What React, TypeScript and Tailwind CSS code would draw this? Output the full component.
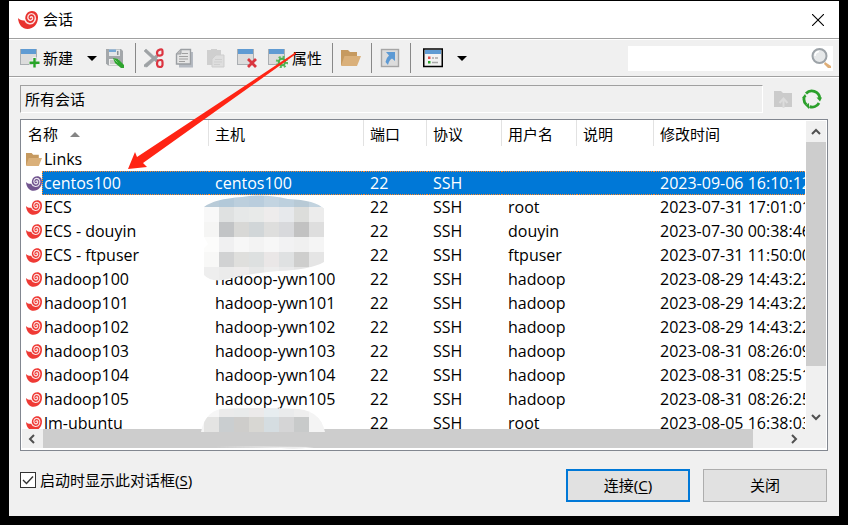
import React from "react";

type Session = {
  name: string;
  host: string;
  port: string;
  protocol: string;
  user: string;
  modified: string;
  folder?: boolean;
  selected?: boolean;
};

const ssh = (name: string, host: string, user: string, modified: string, selected = false): Session => ({
  name,
  host,
  port: "22",
  protocol: "SSH",
  user,
  modified,
  selected,
});

const sessions: Session[] = [
  { name: "Links", host: "", port: "", protocol: "", user: "", modified: "", folder: true },
  ssh("centos100", "centos100", "", "2023-09-06 16:10:12", true),
  ssh("ECS", "", "root", "2023-07-31 17:01:01"),
  ssh("ECS - douyin", "", "douyin", "2023-07-30 00:38:46"),
  ssh("ECS - ftpuser", "", "ftpuser", "2023-07-31 11:50:00"),
  ssh("hadoop100", "hadoop-ywn100", "hadoop", "2023-08-29 14:43:22"),
  ssh("hadoop101", "hadoop-ywn101", "hadoop", "2023-08-29 14:43:22"),
  ssh("hadoop102", "hadoop-ywn102", "hadoop", "2023-08-29 14:43:22"),
  ssh("hadoop103", "hadoop-ywn103", "hadoop", "2023-08-31 08:26:09"),
  ssh("hadoop104", "hadoop-ywn104", "hadoop", "2023-08-31 08:25:51"),
  ssh("hadoop105", "hadoop-ywn105", "hadoop", "2023-08-31 08:26:25"),
  ssh("lm-ubuntu", "", "root", "2023-08-05 16:38:03"),
];

function Shell({ className, fill }: { className: string; fill: string }) {
  return (
    <svg viewBox="0 0 20 18" className={className} aria-hidden="true">
      <path d="M0 7C1.500 9 4.500 9.800 7.500 9.200C6.500 4 9.500 0 14 0C18 0 20 3 20 6.500C20 13 15.500 18 9.500 18C4.500 18 .5 14 0 7Z" fill={fill} />
      <path
        d="M7 9C8.500 13.500 14.500 14 16.600 10.200C18.600 6.500 16.600 2.600 13.400 2.600C10.300 2.600 8.800 6.300 10.600 8.600C12.200 10.300 15 9 14.600 6.800C14.300 5.400 12.800 5.400 12.400 6.600"
        fill="none"
        stroke="#fff"
        strokeOpacity=".85"
        strokeWidth="1.400"
        strokeLinecap="round"
      />
    </svg>
  );
}

function Folder({ className }: { className: string }) {
  return (
    <svg viewBox="0 0 20 16" className={className} aria-hidden="true">
      <path d="M0 0H7L9 2H16V15H0Z" fill="#c69a60" />
      <path d="M3.500 6H20L16 16H0Z" fill="#dab07a" />
    </svg>
  );
}

function WindowIcon({ children }: { children?: React.ReactNode }) {
  return (
    <svg viewBox="0 0 20 20" className="size-5 shrink-0" aria-hidden="true">
      <rect x="0.500" y="1.500" width="16" height="15" fill="#dcdcdc" stroke="#aaaeb2" />
      <rect x="1" y="1" width="15" height="5" fill="#5f9bd3" />
      {children}
    </svg>
  );
}

function Caret() {
  return (
    <svg viewBox="0 0 10 5" className="h-[5px] w-[10px]" aria-hidden="true">
      <path d="M0 0H10L5 5Z" fill="#000" />
    </svg>
  );
}

function Separator() {
  return <div className="ml-[10px] h-[30px] w-px shrink-0 bg-[#888]" />;
}

function Toolbar() {
  return (
    <div className="flex h-[37px] items-center border-t border-white bg-[#f0f0f0] pl-[11px] pr-[6px]">
      <button className="flex items-center gap-[3px] whitespace-nowrap">
        <WindowIcon>
          <path d="M14.500 9V20M9 14.500H20" stroke="#f0f0f0" strokeWidth="4" />
          <path d="M14.500 10V19.500M9.500 14.700H19.500" stroke="#28a428" strokeWidth="2.400" />
        </WindowIcon>
        新建
      </button>
      <button className="ml-[14px]" aria-label="新建选项"><Caret /></button>
      <button className="ml-2" aria-label="保存">
        <svg viewBox="0 0 20 20" className="size-5" aria-hidden="true">
          <path d="M1 1H16L18 3V17.500H3L1 15.500Z" fill="#a3a7aa" />
          <path d="M4 1.500H15V8H4Z" fill="#e4e6e8" />
          <path d="M4 1.500H11V4H4Z" fill="#78a9d6" />
          <path d="M12 3H13.500V7H12Z" fill="#8c9296" />
          <path d="M4 11H14V17H4Z" fill="#eee" />
          <path d="M5 13H10M5 15H11" stroke="#aaa" />
          <path d="M8 10L13 11L19 17V20H16L10 15Z" fill="#2fa52f" />
          <path d="M9.500 11.500L12.500 14.500" stroke="#79cf79" />
        </svg>
      </button>
      <Separator />
      <div className="ml-2 flex items-center gap-[11px]">
        <button aria-label="剪切">
          <svg viewBox="0 0 20 20" className="size-5" aria-hidden="true">
            <path d="M0 3L2 1L14 12L12 14Z M0 17L12 7L14 9L3 19L0 18.500Z" fill="#9ea2a5" stroke="#9ea2a5" strokeWidth=".6" />
            <path d="M14 2.500Q18.500 0 18.500 3V6Q18 8 14 7.500Q12 5 14 2.500ZM14 12.500Q18.500 11 18.500 14V17Q18 20 14 18.500Q12 16 14 12.500Z" fill="none" stroke="#dc3440" strokeWidth="2.200" />
          </svg>
        </button>
        <button aria-label="复制">
          <svg viewBox="0 0 20 20" className="size-5" aria-hidden="true">
            <path d="M6 4H18V19.500H4V16H6Z" fill="#b5bac2" />
            <path d="M6 1.500H15.500V16H1.500V6Z" fill="#e5e5e5" stroke="#9b9fa3" strokeWidth="1.400" />
            <path d="M6 1.500V6H1.500" fill="#bbb" stroke="#9b9fa3" />
            <path d="M7 5.500H13M4 8.500H13M4 11H13M4 13.500H10" stroke="#a0a0a0" />
          </svg>
        </button>
        <button aria-label="粘贴">
          <svg viewBox="0 0 20 20" className="size-5" aria-hidden="true">
            <path d="M1 2H5V1H11V2H15V17H1Z" fill="#cfcfcf" />
            <path d="M10 7H18V19H6V11Z" fill="#dedede" stroke="#cdcdcd" />
            <path d="M9 11.500H16M8 14H16M8 16.500H14" stroke="#cfcfcf" />
          </svg>
        </button>
        <button aria-label="删除">
          <WindowIcon>
            <path d="M11 11L19 19M19 11L11 19" stroke="#d9363f" strokeWidth="2.800" />
          </WindowIcon>
        </button>
        <button className="flex items-center gap-1 whitespace-nowrap">
          <WindowIcon>
            <circle cx="14" cy="14" r="5" fill="none" stroke="#5bb95b" strokeWidth="2.400" strokeDasharray="2 1.920" />
            <circle cx="14" cy="14" r="3.200" fill="#dce9dc" stroke="#4caf4c" strokeWidth="2" />
          </WindowIcon>
          属性
        </button>
      </div>
      <Separator />
      <button className="ml-2" aria-label="打开文件夹"><Folder className="h-4 w-5" /></button>
      <Separator />
      <button className="ml-2" aria-label="快捷方式">
        <svg viewBox="0 0 20 20" className="size-5" aria-hidden="true">
          <rect x="1.500" y="1.500" width="17" height="17" fill="#dcdcdc" stroke="#a5a5a5" strokeWidth="1.400" />
          <path d="M6 4H15V13L12 10.500Q9 12 8 17L5.500 14Q6 10 9 7.500Z" fill="#5d9ad4" />
        </svg>
      </button>
      <Separator />
      <button className="ml-3" aria-label="视图">
        <svg viewBox="0 0 20 20" className="size-5" aria-hidden="true">
          <rect x="0.750" y="1" width="18.500" height="17.500" fill="#f2f2f2" stroke="#000" strokeWidth="1.500" />
          <rect x="2" y="2" width="16" height="4" fill="#5f9bd3" />
          <path d="M5 8.500H7.500V11H5Z" fill="#e05050" />
          <path d="M5 13H7.500V15.500H5Z" fill="#28a428" />
          <path d="M9 10H11M12 10H15M9 14.500H15" stroke="#a8a8a8" strokeWidth="1.500" />
        </svg>
      </button>
      <button className="ml-[14px]" aria-label="视图选项"><Caret /></button>
      <div className="ml-auto flex h-[25px] w-[205px] items-center bg-white pr-[2px]">
        <input type="text" aria-label="搜索" className="min-w-0 flex-1 bg-transparent px-1 outline-none" />
        <button aria-label="开始搜索">
          <svg viewBox="0 0 20 20" className="size-5" aria-hidden="true">
            <path d="M14 14L20 18V20H17L13 16Z" fill="#dfae77" />
            <circle cx="8.500" cy="8" r="7" fill="#e6e8e9" stroke="#9da3a8" strokeWidth="2" />
            <path d="M4 8Q4 4 8 3.500" fill="none" stroke="#fff" strokeWidth="1.500" />
          </svg>
        </button>
      </div>
    </div>
  );
}

function SessionRow({ s }: { s: Session }) {
  const tone = s.selected ? "border-dotted border-[#ff8728] bg-[#0078d7] text-white" : "border-transparent";
  const cell = `h-6 overflow-hidden border-y p-0 pl-[6px] leading-[22px] ${tone}`;
  return (
    <tr>
      <td className="h-6 p-0">
        <div className="flex h-6 items-center pl-[5px]">
          {s.folder ? (
            <Folder className="h-[13px] w-4 shrink-0" />
          ) : (
            <Shell className="h-[15px] w-4 shrink-0" fill={s.selected ? "#71548f" : "#ef3a35"} />
          )}
          <span className={`h-6 flex-1 border-y border-l pl-px leading-[22px] ${tone}`}>{s.name}</span>
        </div>
      </td>
      <td className={cell}>{s.host}</td>
      <td className={cell}>{s.port}</td>
      <td className={cell}>{s.protocol}</td>
      <td className={cell}>{s.user}</td>
      <td className={cell}></td>
      <td className={cell}>{s.modified}</td>
    </tr>
  );
}

const mosaicRows = [
  ["#b9cbd8", "#b3c9d9", "#bccfdd", "#b9cddd", "#c3d4e1", "#bdd0de", "#b8cad6", "#c2d3df"],
  ["#f8f8f8", "#dfe1e1", "#e6e8e8", "#e8eae9", "#eeecec", "#e7e9ec", "#dcdddb", "#ececec"],
  ["#f5f5f4", "#c2c4c6", "#d8d8d6", "#d1d6d8", "#dededd", "#d8d9dc", "#c2c2c2", "#dedede"],
  ["#fcfcfb", "#f0f0f1", "#f7f7f7", "#f3f3f3", "#f7f7f7", "#f2f2f3", "#f0f0f0", "#f5f5f5"],
  ["#f8f8f7", "#d1d2d3", "#dfdfdd", "#dde0e0", "#eae7e7", "#dfe1e2", "#cececd", "#e5e5e5"],
  ["#eeeeee", "#ebebeb", "#eeecec", "#e6e7e7", "#ededed", "#e9e9ea", "#e4e4e4", "#eeeeee"],
];

const smallMosaicRows = [
  ["#fafafa", "#f6f6f6", "#ebebeb", "#e9ebeb", "#eceaea", "#e7edf0", "#eaebec", "#eeeeee", "#f4f4f4"],
  ["#f5f5f5", "#e4e4e3", "#caced0", "#cecdcb", "#d8d7d3", "#d5dde1", "#d5d5d6", "#c8caca", "#f4f4f4"],
];

function HostMosaic() {
  return (
    <svg viewBox="0 0 120 86" className="pointer-events-none absolute left-[183px] top-[75px] h-[86px] w-[120px]" aria-hidden="true">
      <clipPath id="host-blob">
        <path d="M0 12Q10 4 38 2Q60 -2 84 4Q112 5 120 14V67Q106 75 74 76Q50 78 28 83Q8 89 0 80V53L4 49L0 42Z" />
      </clipPath>
      <g clipPath="url(#host-blob)">
        {mosaicRows.map((row, r) =>
          row.map((c, i) => (
            <rect key={`${r}-${i}`} x={i * 15} y={r === 0 ? 0 : r * 15 - 3} width="15" height="15" fill={c} />
          )),
        )}
      </g>
    </svg>
  );
}

function LowerMosaic() {
  return (
    <svg viewBox="0 0 124 42" className="pointer-events-none absolute left-[180px] top-[288px] h-[42px] w-[124px]" aria-hidden="true">
      <clipPath id="lower-blob">
        <path d="M0 24Q4 4 20 1Q60 -1 98 1Q120 4 124 24Z" />
      </clipPath>
      <g clipPath="url(#lower-blob)">
        {smallMosaicRows.map((row, r) =>
          row.map((c, i) => (
            <rect key={`${r}-${i}`} x={i * 15 - 12} y={r * 9} width="16" height="15" fill={c} />
          )),
        )}
      </g>
      <path d="M14 39Q60 38 113 39Q95 42 80 40Z" fill="#ececec" />
    </svg>
  );
}

const chevron = "fill-none stroke-[#505050] stroke-2";

function SessionList() {
  const head = "h-[27px] p-0 pl-[6px] pt-px text-left font-normal leading-[26px]";
  const rule = "bg-[linear-gradient(#e2e2e2,#e2e2e2)] bg-[length:1px_26px] bg-[position:right_top] bg-no-repeat";
  return (
    <div className="relative mt-[6px] border border-[#828790] bg-white pb-[2px] pr-px">
      <div className="flex h-[309px]">
        <div className="min-w-0 flex-1 overflow-hidden pr-px">
          <table className="w-full table-fixed border-separate border-spacing-0 whitespace-nowrap font-['Open_Sans','Noto_Sans_CJK_SC',sans-serif] text-[16px]">
            <colgroup>
              <col className="w-[188px]" />
              <col className="w-[155px]" />
              <col className="w-[63px]" />
              <col className="w-[75px]" />
              <col className="w-[75px]" />
              <col className="w-[77px]" />
              <col />
            </colgroup>
            <thead className="text-[15px]">
              <tr>
                <th className={`${head} ${rule}`}>
                  <span className="flex items-center gap-3 pl-px">
                    名称
                    <svg viewBox="0 0 10 5" className="h-[5px] w-[10px]" aria-hidden="true">
                      <path d="M0 5H10L5 0Z" fill="#858585" />
                    </svg>
                  </span>
                </th>
                <th className={`${head} ${rule}`}>主机</th>
                <th className={`${head} ${rule}`}>端口</th>
                <th className={`${head} ${rule}`}>协议</th>
                <th className={`${head} ${rule}`}>用户名</th>
                <th className={`${head} ${rule}`}>说明</th>
                <th className={head}>修改时间</th>
              </tr>
            </thead>
            <tbody>
              {sessions.map((s) => (
                <SessionRow key={s.name} s={s} />
              ))}
            </tbody>
          </table>
        </div>
        <div className="mt-px flex w-5 shrink-0 flex-col bg-[#f0f0f0]">
          <button className="grid h-[21px] place-items-center pr-px" aria-label="向上滚动">
            <svg viewBox="0 0 10 7" className="h-[7px] w-[10px]"><path d="M1 6L5 2L9 6" className={chevron} /></svg>
          </button>
          <div className="h-[224px] bg-[#cdcdcd]" />
          <button className="mt-auto grid h-[23px] place-items-center pr-px" aria-label="向下滚动">
            <svg viewBox="0 0 10 7" className="h-[7px] w-[10px]"><path d="M1 1L5 5L9 1" className={chevron} /></svg>
          </button>
        </div>
      </div>
      <div className="ml-px flex h-[19px] bg-[#f0f0f0]">
        <button className="grid w-[21px] shrink-0 place-items-center pr-[2px]" aria-label="向左滚动">
          <svg viewBox="0 0 7 10" className="h-[10px] w-[7px]"><path d="M6 1L2 5L6 9" className={chevron} /></svg>
        </button>
        <div className="flex-1 bg-[#cdcdcd]" />
        <button className="ml-[31px] mr-5 grid w-[22px] shrink-0 place-items-center pr-[2px]" aria-label="向右滚动">
          <svg viewBox="0 0 7 10" className="h-[10px] w-[7px]"><path d="M1 1L5 5L1 9" className={chevron} /></svg>
        </button>
      </div>
      <HostMosaic />
      <LowerMosaic />
    </div>
  );
}

export default function App() {
  return (
    <div className="relative min-h-screen bg-black px-[9px] pb-[9px] pt-px font-['Noto_Sans','Noto_Sans_CJK_SC',sans-serif] text-[15px] text-black">
      <div className="bg-[#f0f0f0] pb-[14px]">
        <header className="flex h-[37px] items-center bg-white pl-[9px] pr-[15px]">
          <Shell className="h-[18px] w-5" fill="#e8322e" />
          <h1 className="ml-[5px]">会话</h1>
          <button className="ml-auto" aria-label="关闭窗口">
            <svg viewBox="0 0 12 12" className="size-3"><path d="M0 0L12 12M12 0L0 12" stroke="#000" strokeWidth="1.100" /></svg>
          </button>
        </header>
        <div className="border-y border-[#a0a0a0]">
          <Toolbar />
        </div>
        <main className="border-t border-white pl-[11px] pr-[11px] pt-[7px]">
          <div className="flex items-center">
            <div className="h-7 flex-1 border border-b-white border-l-[#a0a0a0] border-r-white border-t-[#a0a0a0] pl-1 leading-[26px]">所有会话</div>
            <button className="ml-[11px]" aria-label="上一级">
              <svg viewBox="0 0 20 20" className="size-5" aria-hidden="true">
                <path d="M0 2H7L9 4H18V18H0Z" fill="#cbcbcb" />
                <path d="M9.500 19V11M5.500 14L9.500 9.500L13.500 14" fill="none" stroke="#dcdcdc" strokeWidth="2" />
              </svg>
            </button>
            <button className="ml-2 mr-[6px]" aria-label="刷新">
              <svg viewBox="0 0 20 20" className="size-5" aria-hidden="true">
                <g fill="none" stroke="#2ba02b" strokeWidth="2.800">
                  <path d="M4 4.500A8 8 0 0 1 17.800 9" />
                  <path d="M17 14A8 8 0 0 1 7.500 17.600" />
                  <path d="M4.500 15.800A8 8 0 0 1 2.200 8" />
                </g>
                <path d="M14.500 8.500H20L18 12.500ZM7 14V20L3.500 16.500ZM0 9L4.500 8L3 5Z" fill="#2ba02b" />
              </svg>
            </button>
          </div>
          <SessionList />
          <footer className="flex items-start pr-px pt-[18px]">
            <label className="flex items-center gap-1 whitespace-nowrap">
              <input
                type="checkbox"
                defaultChecked
                className="size-4 appearance-none border border-[#333] bg-white bg-[url('data:image/svg+xml;utf8,%3Csvg%20xmlns=%22http://www.w3.org/2000/svg%22%20viewBox=%220%200%2014%2014%22%3E%3Cpath%20d=%22M2%207L5.500%2010.500L12%203.500%22%20fill=%22none%22%20stroke=%22%23333%22%20stroke-width=%221.400%22/%3E%3C/svg%3E')]"
              />
              <span>启动时显示此对话框(<u className="underline-offset-2">S</u>)</span>
            </label>
            <button className="ml-auto h-[33px] w-[124px] border-2 border-[#0078d7] bg-[#e1e1e1]">
              连接(<u className="underline-offset-2">C</u>)
            </button>
            <button className="ml-[13px] h-[33px] w-[124px] border border-[#adadad] bg-[#e1e1e1]">关闭</button>
          </footer>
        </main>
      </div>
      <svg viewBox="0 0 172 120" className="pointer-events-none absolute left-[127px] top-[51px] h-[120px] w-[172px]" aria-hidden="true">
        <path d="M169 1L10 106L8 101L1 118L20 116L16 112L169 3Z" fill="#ff2414" />
      </svg>
    </div>
  );
}
